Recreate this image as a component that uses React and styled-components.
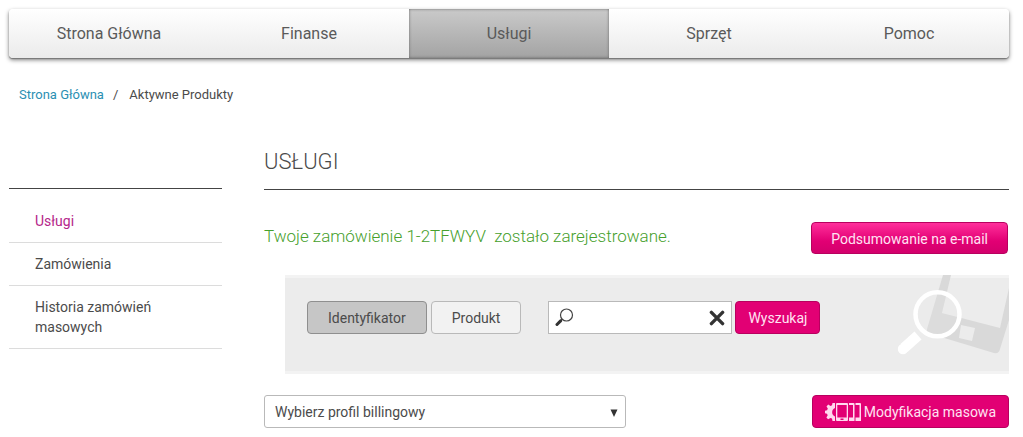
import styled, { createGlobalStyle } from "styled-components";
import { useState } from "react";

const navItems = ["Strona Główna", "Finanse", "Usługi", "Sprzęt", "Pomoc"];
const sideItems = ["Usługi", "Zamówienia", "Historia zamówień masowych"];
const searchModes = ["Identyfikator", "Produkt"];

export default function App() {
  const [mode, setMode] = useState("Identyfikator");
  const [query, setQuery] = useState("");

  return (
    <>
      <GlobalStyle />
      <Page>
        <NavBar>
          {navItems.map((item) => (
            <NavLink key={item} href="#" $active={item === "Usługi"}>
              {item}
            </NavLink>
          ))}
        </NavBar>

        <Breadcrumbs aria-label="Okruszki">
          <BreadcrumbLink href="#">Strona Główna</BreadcrumbLink>
          <span>/</span>
          <span>Aktywne Produkty</span>
        </Breadcrumbs>

        <Columns>
          <SideMenu>
            {sideItems.map((item) => (
              <SideLink key={item} href="#" $active={item === "Usługi"}>
                {item}
              </SideLink>
            ))}
          </SideMenu>

          <Content>
            <Title>USŁUGI</Title>

            <MessageRow>
              <Message>Twoje zamówienie 1-2TFWYV&nbsp; zostało zarejestrowane.</Message>
              <SummaryButton type="button">Podsumowanie na e-mail</SummaryButton>
            </MessageRow>

            <SearchPanel onSubmit={(event) => event.preventDefault()}>
              <PanelArt />
              <ModeGroup>
                {searchModes.map((item) => (
                  <ModeButton
                    key={item}
                    type="button"
                    $active={item === mode}
                    aria-pressed={item === mode}
                    onClick={() => setMode(item)}
                  >
                    {item}
                  </ModeButton>
                ))}
              </ModeGroup>
              <SearchBox>
                <SearchIcon />
                <SearchInput
                  aria-label="Szukaj"
                  value={query}
                  onChange={(event) => setQuery(event.target.value)}
                />
                <ClearButton
                  type="button"
                  aria-label="Wyczyść"
                  onClick={() => setQuery("")}
                >
                  <ClearIcon />
                </ClearButton>
              </SearchBox>
              <SearchButton type="submit">Wyszukaj</SearchButton>
            </SearchPanel>

            <ActionsRow>
              <SelectWrapper>
                <Select aria-label="Profil billingowy">
                  <option>Wybierz profil billingowy</option>
                </Select>
                <SelectArrow viewBox="0 0 8 8" aria-hidden="true">
                  <path d="M0.5 0.5h7L4 8z" fill="#333" />
                </SelectArrow>
              </SelectWrapper>
              <BulkButton type="button">
                <DevicesIcon />
                Modyfikacja masowa
              </BulkButton>
            </ActionsRow>
          </Content>
        </Columns>
      </Page>
    </>
  );
}

function SearchIcon() {
  return (
    <svg width="19" height="19" viewBox="0 0 19 19" fill="none" aria-hidden="true">
      <circle cx="11.5" cy="7" r="6" stroke="#444" strokeWidth="1.2" />
      <path d="M7.2 11.3L6 12.5" stroke="#444" strokeWidth="1.5" />
      <path d="M5.6 12.9L2 16.5" stroke="#333" strokeWidth="3" strokeLinecap="round" />
    </svg>
  );
}

function ClearIcon() {
  return (
    <svg width="16" height="16" viewBox="0 0 16 16" aria-hidden="true">
      <path
        d="M2.4 2.4l11.2 11.2M13.6 2.4L2.4 13.6"
        stroke="#333"
        strokeWidth="3.4"
        strokeLinecap="round"
      />
    </svg>
  );
}

function DevicesIcon() {
  return (
    <svg width="36" height="20" viewBox="0 0 36 20" fill="#ffd9ee" aria-hidden="true">
      <path d="M10 1v5a4.6 4.6 0 0 0 0 8.500v4.500H7.500L7 16.600l-1.600-.7-2.300 1.400-1.700-1.800 1.300-2.200-.7-1.600L0 11.200V8.700L2.100 8.200l.7-1.600-1.300-2.200 1.700-1.800 2.300 1.400L7 3.300 7.500 1z" />
      <path
        fillRule="evenodd"
        d="M12 1h10a1 1 0 0 1 1 1v16a1 1 0 0 1-1 1H12a1 1 0 0 1-1-1V2a1 1 0 0 1 1-1zm.3 2v12.500h9.400V3zM15.500 16.600v1.300h3v-1.300z"
      />
      <path d="M24 1h4.500a1 1 0 0 1 1 1v17H24v-3.500h4V3h-4zM30.500 1H35a1 1 0 0 1 1 1v17h-5.500v-3.500h4V3h-4z" />
    </svg>
  );
}

function PanelArt() {
  return (
    <ArtSvg viewBox="0 0 113 99" aria-hidden="true">
      <path
        d="M47 0h8l-9 38 58 15 9-40v32l-9 29q-1 5-6 4L35 59q-5-1-4-5z"
        fill="#d9d9d9"
      />
      <path d="M65 50l14 3-3 13-13-3z" fill="#ececec" />
      <circle cx="41.500" cy="39.300" r="22" fill="#ececec" fillOpacity="0.2" stroke="#fff" strokeWidth="4.500" />
      <path d="M22 60.500L8 73" stroke="#fff" strokeWidth="10.500" />
      <circle cx="7" cy="74" r="5.200" fill="#fff" />
    </ArtSvg>
  );
}

const GlobalStyle = createGlobalStyle`
  * {
    box-sizing: border-box;
  }

  body {
    margin: 0;
    background: #fff;
    color: #4b4b4b;
    font-family: Roboto, "Liberation Sans", sans-serif;
    font-size: 14px;
    line-height: 20px;
  }

  a {
    text-decoration: none;
  }

  button, input, select {
    font: inherit;
  }
`;

const Page = styled.div`
  padding: 9px 14px 8px 9px;
`;

const NavBar = styled.nav`
  display: flex;
  height: 49px;
  border-radius: 4px;
  background: linear-gradient(#fff, #ebebeb);
  box-shadow: 0 1px 1px #777, 0 2px 4px rgba(0, 0, 0, 0.5);
`;

const NavLink = styled.a`
  display: flex;
  flex: 1;
  align-items: center;
  justify-content: center;
  color: #5a5a5a;
  font-size: 16px;
  ${({ $active }) =>
    $active &&
    `
    background: linear-gradient(#cacaca, #a3a3a3);
    box-shadow: inset 0 0 3px #666;
  `}
`;

const Breadcrumbs = styled.nav`
  display: flex;
  gap: 9px;
  padding: 27px 10px 0;
  font-size: 13px;

  span:last-child {
    margin-left: 2px;
  }
`;

const BreadcrumbLink = styled.a`
  color: #2b8fb3;
`;

const Columns = styled.div`
  display: grid;
  grid-template-columns: 213px 1fr;
  gap: 42px;
  margin-top: 43px;
`;

const SideMenu = styled.nav`
  align-self: start;
  margin-top: 40px;
  padding-top: 11px;
  border-top: 1px solid #444;
`;

const SideLink = styled.a`
  display: block;
  padding: 11px 60px 11px 26px;
  border-bottom: 1px solid #dcdcdc;
  color: ${({ $active }) => ($active ? "#b5268a" : "#4b4b4b")};
`;

const Content = styled.main`
  min-width: 0;
`;

const Title = styled.h1`
  margin: 0;
  padding-bottom: 14px;
  border-bottom: 1px solid #444;
  font-size: 22px;
  font-weight: 300;
  line-height: 27px;
`;

const MessageRow = styled.div`
  display: flex;
  align-items: center;
  justify-content: space-between;
  margin-top: 32px;
  padding-right: 1px;
`;

const Message = styled.p`
  margin: 0 0 4px;
  color: #46a02c;
  font-size: 17px;
  font-weight: 300;
`;

const PinkButton = styled.button`
  height: 33px;
  padding: 0 12px;
  border: 1px solid #b8005f;
  border-radius: 4px;
  background: #e20074;
  color: #ffe3f2;
  cursor: pointer;
`;

const SummaryButton = styled(PinkButton)`
  height: 32px;
  padding: 2px 19px 0;
  background: linear-gradient(#ff2f9b, #e20074 60%, #d3006c);
`;

const SearchPanel = styled.form`
  position: relative;
  display: flex;
  align-items: center;
  height: 99px;
  margin: 21px 0 0 21px;
  padding: 0 22px 14px;
  border: solid #f3f3f3;
  border-width: 3px 0;
  background: #ececec;
`;

const ArtSvg = styled.svg`
  position: absolute;
  top: -3px;
  right: 0;
  width: 113px;
  height: 99px;
`;

const ModeGroup = styled.div`
  display: flex;
  gap: 4px;
`;

const ModeButton = styled.button`
  height: 33px;
  padding: 0 20px;
  border: 1px solid ${({ $active }) => ($active ? "#8f8f8f" : "#b9b9b9")};
  border-radius: 4px;
  background: ${({ $active }) => ($active ? "#c6c6c6" : "#f2f2f2")};
  color: #4b4b4b;
  cursor: pointer;
`;

const SearchBox = styled.div`
  display: flex;
  flex: 0 1 184px;
  align-items: center;
  min-width: 0;
  height: 33px;
  margin: 0 3px 0 27px;
  padding: 0 6px;
  border: 1px solid #b9b9b9;
  background: #fff;
`;

const SearchInput = styled.input`
  flex: 1;
  min-width: 0;
  border: none;
  outline: none;
  background: none;
`;

const ClearButton = styled.button`
  display: flex;
  padding: 0;
  border: none;
  background: none;
  cursor: pointer;
`;

const SearchButton = styled(PinkButton)`
  position: relative;
`;

const ActionsRow = styled.div`
  display: flex;
  align-items: center;
  justify-content: space-between;
  margin-top: 21px;
`;

const SelectWrapper = styled.div`
  position: relative;
  flex: 0 1 362px;
`;

const Select = styled.select`
  display: block;
  width: 100%;
  height: 33px;
  padding: 0 10px;
  border: 1px solid #b9b9b9;
  border-radius: 3px;
  appearance: none;
  background: #fff;
  color: #4b4b4b;
`;

const SelectArrow = styled.svg`
  position: absolute;
  top: 14px;
  right: 8px;
  width: 8px;
  height: 8px;
  pointer-events: none;
`;

const BulkButton = styled(PinkButton)`
  display: flex;
  align-items: center;
  gap: 3px;
`;
